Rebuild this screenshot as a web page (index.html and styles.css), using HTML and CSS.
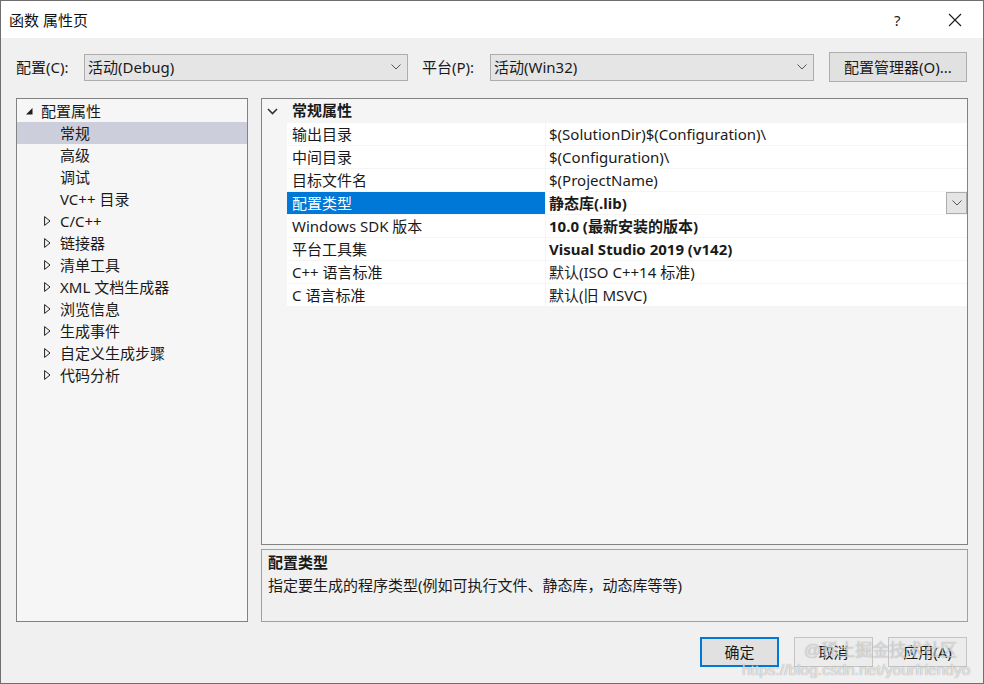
FILE: index.html
```html
<!DOCTYPE html>
<html lang="zh-CN">
<head>
<meta charset="utf-8">
<title>函数 属性页</title>
<link rel="stylesheet" href="styles.css">
</head>
<body>
<div class="window">
  <div class="titlebar">
    <span class="title">函数 属性页</span>
    <span class="tb-help">?</span>
    <span class="tb-close"><svg width="14" height="14" viewBox="0 0 14 14"><path d="M1 1 L13 13 M13 1 L1 13" stroke="#1a1a1a" stroke-width="1.1" fill="none"/></svg></span>
  </div>
  <div class="content">
    <div class="config-row">
      <span class="lbl lbl-config">配置(C):</span>
      <div class="combo combo-config"><span>活动(Debug)</span><svg class="chev" width="10" height="6" viewBox="0 0 10 6"><path d="M0.5 0.5 L5 5 L9.5 0.5" stroke="#555" stroke-width="1" fill="none"/></svg></div>
      <span class="lbl lbl-platform">平台(P):</span>
      <div class="combo combo-platform"><span>活动(Win32)</span><svg class="chev" width="10" height="6" viewBox="0 0 10 6"><path d="M0.5 0.5 L5 5 L9.5 0.5" stroke="#555" stroke-width="1" fill="none"/></svg></div>
      <div class="btn btn-manager">配置管理器(O)...</div>
    </div>
    <div class="main">
      <div class="tree">
        <div class="ti lv0"><span class="arr"><svg width="7" height="7" viewBox="0 0 7 7"><polygon points="6.5,0 6.5,6.5 0,6.5" fill="#1e1e1e"/></svg></span><span>配置属性</span></div>
        <div class="ti lv1 sel"><span class="arr"></span><span>常规</span></div>
        <div class="ti lv1"><span class="arr"></span><span>高级</span></div>
        <div class="ti lv1"><span class="arr"></span><span>调试</span></div>
        <div class="ti lv1"><span class="arr"></span><span>VC++ 目录</span></div>
        <div class="ti lv1"><span class="arr"><svg width="7" height="10" viewBox="0 0 7 10"><polygon points="0.6,0.6 6,5 0.6,9.4" fill="none" stroke="#1e1e1e" stroke-width="1"/></svg></span><span>C/C++</span></div>
        <div class="ti lv1"><span class="arr"><svg width="7" height="10" viewBox="0 0 7 10"><polygon points="0.6,0.6 6,5 0.6,9.4" fill="none" stroke="#1e1e1e" stroke-width="1"/></svg></span><span>链接器</span></div>
        <div class="ti lv1"><span class="arr"><svg width="7" height="10" viewBox="0 0 7 10"><polygon points="0.6,0.6 6,5 0.6,9.4" fill="none" stroke="#1e1e1e" stroke-width="1"/></svg></span><span>清单工具</span></div>
        <div class="ti lv1"><span class="arr"><svg width="7" height="10" viewBox="0 0 7 10"><polygon points="0.6,0.6 6,5 0.6,9.4" fill="none" stroke="#1e1e1e" stroke-width="1"/></svg></span><span>XML 文档生成器</span></div>
        <div class="ti lv1"><span class="arr"><svg width="7" height="10" viewBox="0 0 7 10"><polygon points="0.6,0.6 6,5 0.6,9.4" fill="none" stroke="#1e1e1e" stroke-width="1"/></svg></span><span>浏览信息</span></div>
        <div class="ti lv1"><span class="arr"><svg width="7" height="10" viewBox="0 0 7 10"><polygon points="0.6,0.6 6,5 0.6,9.4" fill="none" stroke="#1e1e1e" stroke-width="1"/></svg></span><span>生成事件</span></div>
        <div class="ti lv1"><span class="arr"><svg width="7" height="10" viewBox="0 0 7 10"><polygon points="0.6,0.6 6,5 0.6,9.4" fill="none" stroke="#1e1e1e" stroke-width="1"/></svg></span><span>自定义生成步骤</span></div>
        <div class="ti lv1"><span class="arr"><svg width="7" height="10" viewBox="0 0 7 10"><polygon points="0.6,0.6 6,5 0.6,9.4" fill="none" stroke="#1e1e1e" stroke-width="1"/></svg></span><span>代码分析</span></div>
      </div>
      <div class="right">
        <div class="grid">
          <div class="cat"><span class="cat-chev"><svg width="11" height="7" viewBox="0 0 11 7"><path d="M1 1 L5.5 5.5 L10 1" stroke="#333" stroke-width="1.6" fill="none"/></svg></span><span class="cat-name">常规属性</span></div>
          <div class="prow"><div class="pname">输出目录</div><div class="pval">$(SolutionDir)$(Configuration)\</div></div>
          <div class="prow"><div class="pname">中间目录</div><div class="pval">$(Configuration)\</div></div>
          <div class="prow"><div class="pname">目标文件名</div><div class="pval">$(ProjectName)</div></div>
          <div class="prow psel"><div class="pname">配置类型</div><div class="pval bold"><span>静态库(.lib)</span><span class="ddbtn"><svg width="10" height="6" viewBox="0 0 10 6"><path d="M0.5 0.5 L5 5 L9.5 0.5" stroke="#555" stroke-width="1" fill="none"/></svg></span></div></div>
          <div class="prow"><div class="pname">Windows SDK 版本</div><div class="pval bold">10.0 (最新安装的版本)</div></div>
          <div class="prow"><div class="pname">平台工具集</div><div class="pval bold">Visual Studio 2019 (v142)</div></div>
          <div class="prow"><div class="pname">C++ 语言标准</div><div class="pval">默认(ISO C++14 标准)</div></div>
          <div class="prow"><div class="pname">C 语言标准</div><div class="pval">默认(旧 MSVC)</div></div>
        </div>
        <div class="desc">
          <div class="desc-title">配置类型</div>
          <div class="desc-text">指定要生成的程序类型(例如可执行文件、静态库，动态库等等)</div>
        </div>
      </div>
    </div>
    <div class="buttons">
      <div class="btn btn-ok">确定</div>
      <div class="btn btn-dim">取消</div>
      <div class="btn btn-dim">应用(A)</div>
      <div class="watermark">
        <div class="wm1">@稀土掘金技术社区</div>
        <div class="wm2">https://blog.csdn.net/yourfriendyo</div>
      </div>
    </div>
  </div>
</div>
</body>
</html>
```
FILE: styles.css
```css
* { box-sizing: border-box; }
html, body { margin: 0; padding: 0; }
body {
  width: 984px;
  height: 684px;
  overflow: hidden;
  font-family: "Segoe UI", "Noto Sans", "Noto Sans CJK SC", sans-serif;
  font-size: 15px;
  color: #1a1a1a;
  background: #f0f0f0;
}
.window {
  width: 984px;
  height: 684px;
  border: 1px solid #6e6e6e;
  display: flex;
  flex-direction: column;
  background: #f0f0f0;
  overflow: hidden;
}
.titlebar {
  height: 37px;
  flex: none;
  background: #ffffff;
  display: flex;
  align-items: center;
  padding-left: 8px;
  line-height: 20px;
}
.title { flex: 1; font-size: 15px; color: #111; }
.tb-help { width: 14px; margin-right: 40px; font-size: 15px; color: #222; }
.tb-close { width: 14px; height: 14px; margin-right: 21px; display: flex; }
.content {
  flex: 1;
  display: flex;
  flex-direction: column;
  padding: 14px 15px 16px 15px;
}
.config-row {
  display: flex;
  align-items: center;
  height: 30px;
}
.lbl { line-height: 20px; flex: none; }
.lbl-config { width: 68px; }
.lbl-platform { width: 68px; margin-left: 14px; }
.combo {
  flex: none;
  height: 27px;
  border: 1px solid #adadad;
  background: #e5e5e5;
  display: flex;
  align-items: center;
  justify-content: space-between;
  padding: 0 6px 0 3px;
  line-height: 20px;
}
.combo-config { width: 324px; }
.combo-platform { width: 324px; }
.btn {
  border: 1px solid #adadad;
  background: #e1e1e1;
  display: flex;
  align-items: center;
  justify-content: center;
  line-height: 20px;
}
.btn-manager { flex: none; width: 138px; height: 30px; margin-left: 15px; }
.main {
  display: flex;
  gap: 13px;
  margin-top: 16px;
  height: 524px;
}
.tree {
  width: 232px;
  border: 1px solid #828282;
  background: #f6f6f6;
  padding-top: 1px;
}
.ti {
  height: 22px;
  display: flex;
  align-items: center;
  line-height: 20px;
  white-space: nowrap;
}
.ti.lv0 { padding-left: 9px; }
.ti.lv1 { padding-left: 27px; }
.ti.sel { background: #cccedb; }
.arr { width: 16px; flex: none; display: flex; align-items: center; }
.ti.lv0 .arr { width: 15px; }
.right {
  flex: 1;
  display: flex;
  flex-direction: column;
  gap: 4px;
}
.grid {
  height: 447px;
  border: 1px solid #828282;
  background: #f5f5f5;
  padding-top: 1px;
}
.cat {
  height: 23px;
  display: flex;
  align-items: center;
  font-weight: bold;
  line-height: 20px;
  padding-bottom: 3px;
}
.cat-chev { width: 30px; padding-left: 5px; display: flex; padding-top: 2px; }
.prow {
  height: 23px;
  display: grid;
  grid-template-columns: 258px 1fr;
  column-gap: 1px;
  margin-left: 25px;
  padding-bottom: 1px;
}
.pname, .pval {
  background: #ffffff;
  display: flex;
  align-items: center;
  line-height: 20px;
  white-space: nowrap;
}
.pname { padding-left: 5px; }
.pval { padding-left: 3px; justify-content: space-between; }
.bold { font-weight: bold; }
.psel .pname { background: #0078d7; color: #ffffff; }
.ddbtn {
  width: 21px;
  height: 22px;
  border: 1px solid #adadad;
  background: #e5e5e5;
  display: flex;
  align-items: center;
  justify-content: center;
}
.desc {
  flex: 1;
  border: 1px solid #a0a0a0;
  background: #f0f0f0;
  padding: 1px 6px;
  line-height: 23px;
}
.desc-title { font-weight: bold; }
.buttons {
  position: relative;
  display: flex;
  justify-content: flex-end;
  gap: 15px;
  margin-top: 15px;
  padding-right: 1px;
}
.buttons .btn { width: 79px; height: 30px; }
.btn-ok { border: 2px solid #0078d7; }
.btn-dim { background: #ececec; border-color: #c4c4c4; }
.watermark {
  position: absolute;
  left: 726px;
  top: 4px;
  pointer-events: none;
  white-space: nowrap;
  font-family: "Liberation Sans", "Noto Sans CJK SC", sans-serif;
}
.wm1 {
  margin-left: 62px;
  font-size: 17px;
  line-height: 20px;
  color: rgba(255,255,255,0.55);
  text-shadow: 0 0 1px rgba(90,90,90,0.6);
}
.wm2 {
  font-size: 15.5px;
  line-height: 17px;
  color: rgba(255,255,255,0.75);
  text-shadow: 0 0 1px rgba(100,100,100,0.8);
}
```
